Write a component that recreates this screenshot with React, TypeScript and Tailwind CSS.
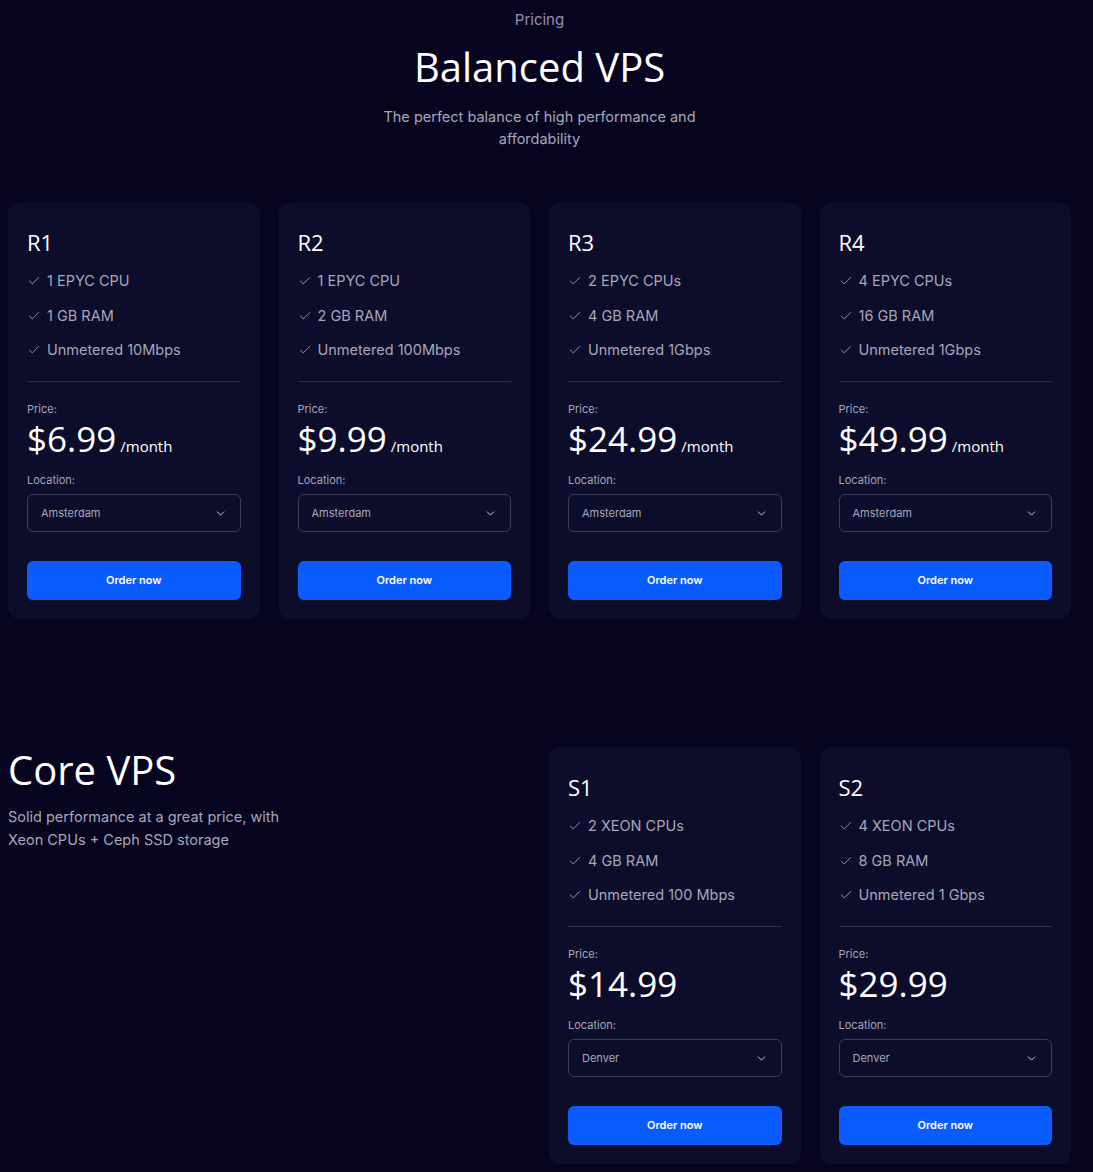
import React from "react";
import { Check, ChevronDown } from "lucide-react";

type Plan = {
  name: string;
  features: string[];
  price: string;
  perMonth: boolean;
  location: string;
};

const balanced: Plan[] = [
  { name: "R1", features: ["1 EPYC CPU", "1 GB RAM", "Unmetered 10Mbps"], price: "$6.99", perMonth: true, location: "Amsterdam" },
  { name: "R2", features: ["1 EPYC CPU", "2 GB RAM", "Unmetered 100Mbps"], price: "$9.99", perMonth: true, location: "Amsterdam" },
  { name: "R3", features: ["2 EPYC CPUs", "4 GB RAM", "Unmetered 1Gbps"], price: "$24.99", perMonth: true, location: "Amsterdam" },
  { name: "R4", features: ["4 EPYC CPUs", "16 GB RAM", "Unmetered 1Gbps"], price: "$49.99", perMonth: true, location: "Amsterdam" },
];

const core: Plan[] = [
  { name: "S1", features: ["2 XEON CPUs", "4 GB RAM", "Unmetered 100 Mbps"], price: "$14.99", perMonth: false, location: "Denver" },
  { name: "S2", features: ["4 XEON CPUs", "8 GB RAM", "Unmetered 1 Gbps"], price: "$29.99", perMonth: false, location: "Denver" },
];

const heading = "font-['Open_Sans',sans-serif]";

const PlanCard: React.FC<{ plan: Plan }> = ({ plan }) => {
  return (
    <div className="rounded-xl bg-[#0c0c2b] px-[19px] pt-[26px] pb-[19px]">
      <h3 className={`${heading} text-[22px] leading-[28px] text-white`}>{plan.name}</h3>
      <ul className="mt-[14px] flex flex-col gap-[12.5px]">
        {plan.features.map((f) => (
          <li key={f} className="flex items-center gap-[6px] text-[14.5px] leading-[22px] text-[#a7a7b9]">
            <Check size={14} strokeWidth={1.6} className="text-[#9a9aae]" />
            {f}
          </li>
        ))}
      </ul>
      <div className="mt-[20px] border-t border-[#2c2d48]" />
      <p className="mt-[22px] text-[11px] leading-[11px] text-[#a7a7b9]">Price:</p>
      <div className="flex items-baseline gap-[4px]">
        <span className={`${heading} text-[35px] leading-[48px] text-white`}>{plan.price}</span>
        {plan.perMonth && <span className={`${heading} text-[15px] text-white`}>/month</span>}
      </div>
      <p className="mt-[10px] text-[11px] leading-[14px] text-[#a7a7b9]">Location:</p>
      <div className="mt-[7px] flex h-[38px] items-center justify-between rounded-md border border-[#3b3c57] px-[13px] text-[11px] text-[#a7a7b9]">
        <span>{plan.location}</span>
        <ChevronDown size={13} strokeWidth={1.8} className="text-[#d0d0dc]" />
      </div>
      <button className="mt-[29px] h-[39px] w-full rounded-md bg-[#0b5cff] text-[11px] font-semibold text-white">
        Order now
      </button>
    </div>
  );
};

export default function App() {
  return (
    <div className="min-h-screen bg-[#070420] font-['Inter',sans-serif] pl-[8px] pr-[22px] pt-[10px] pb-[10px]">
      <div className="flex flex-col items-center text-center">
        <p className="text-[15px] leading-[20px] text-[#9a8fb0]">Pricing</p>
        <h1 className={`${heading} mt-[13px] text-[40px] leading-[48px] text-white`}>Balanced VPS</h1>
        <p className="mt-[15px] w-[330px] text-[14.5px] leading-[22px] text-[#a7a7b9]">
          The perfect balance of high performance and affordability
        </p>
      </div>

      <div className="mt-[52px] grid grid-cols-4 gap-[19px]">
        {balanced.map((p) => (
          <PlanCard key={p.name} plan={p} />
        ))}
      </div>

      <div className="mt-[128px] grid grid-cols-4 gap-[19px]">
        <div className="col-span-2">
          <h2 className={`${heading} text-[40px] leading-[46px] text-white`}>Core VPS</h2>
          <p className="mt-[12px] w-[290px] text-[14.5px] leading-[23px] text-[#a7a7b9]">
            Solid performance at a great price, with Xeon CPUs + Ceph SSD storage
          </p>
        </div>
        {core.map((p) => (
          <PlanCard key={p.name} plan={p} />
        ))}
      </div>
    </div>
  );
}
